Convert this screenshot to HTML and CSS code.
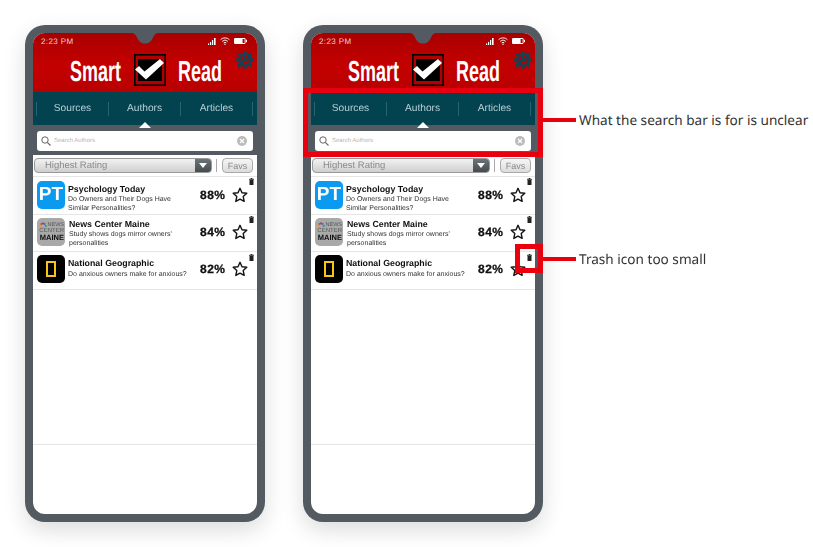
FILE: index.html
```html
<!DOCTYPE html>
<html lang="en">
<head>
    <meta charset="UTF-8">
    <meta name="viewport" content="width=device-width, initial-scale=1.0">
    <title>Smart Read</title>
    <link rel="stylesheet" href="styles.css">
</head>
<body>
    <svg class="defs" width="0" height="0">
        <symbol id="signal" viewBox="0 0 8 7"><path d="M0 7h1.200V5.500H0zM2 7h1.200V4H2zM4 7h1.200V2H4zM6 7h1.600V0H6z" fill="#fff"/></symbol>
        <symbol id="wifi" viewBox="0 0 10 8"><path d="M.6 2.600a6.400 6.400 0 0 1 8.800 0M2.200 4.300a4.100 4.100 0 0 1 5.600 0M3.700 5.900a1.900 1.900 0 0 1 2.600 0" fill="none" stroke="#fff" stroke-width=".9"/><circle cx="5" cy="7.200" r=".7" fill="#fff"/></symbol>
        <symbol id="battery" viewBox="0 0 13 6"><rect x="0" y="0" width="11.500" height="6" rx="1.200" fill="#fff"/><rect x="8.600" y="1" width="2" height="4" fill="#b00000"/><rect x="11.800" y="1.800" width="1.200" height="2.400" fill="#fff"/></symbol>
        <symbol id="gear" viewBox="0 0 18 18"><path d="M7.600 0h2.800l.4 2.200 1.600.7 1.900-1.300 2 2-1.300 1.900.7 1.600 2.200.4v2.800l-2.200.4-.7 1.600 1.300 1.900-2 2-1.900-1.300-1.600.7-.4 2.200H7.600l-.4-2.200-1.600-.7-1.900 1.300-2-2 1.300-1.900-.7-1.600L0 10.400V7.600l2.200-.4.700-1.600L1.600 3.700l2-2 1.900 1.300 1.600-.7z" fill="#1a3f50"/><circle cx="9" cy="9" r="4.400" fill="#b80000"/><path d="M2.600 16.800l6.900-7a3.400 3.400 0 0 0 4.400-4.300l-2 2-1.900-.5-.5-1.900 2-2a3.400 3.400 0 0 0-4.300 4.400L.8 14.900z" fill="#1a3f50"/></symbol>
        <symbol id="check" viewBox="0 0 32 32"><rect x=".8" y=".8" width="30.400" height="30.400" fill="#b00000" stroke="#000" stroke-width="1.600"/><rect x="4" y="5" width="24" height="22" fill="#000"/><path d="M1 15.500l4-3.500 5.500 5.500L26 5l4 4-18 16.500z" fill="#fff"/></symbol>
        <symbol id="star" viewBox="0 0 16 16"><path d="M8 1.300l2 4.500 4.800.5-3.600 3.300 1 4.800L8 12.100l-4.200 2.300 1-4.800L1.200 6.300 6 5.800z" fill="none" stroke="#111" stroke-width="1.400" stroke-linejoin="round"/></symbol>
        <symbol id="trash" viewBox="0 0 5 7"><path d="M1.700 0h1.600v.8h1.300q.4 0 .4.400v.6H0v-.6q0-.4.400-.4h1.300zM.5 2.100h4v4.300q0 .6-.6.6H1.100q-.6 0-.6-.6z" fill="#222"/></symbol>
        <symbol id="search" viewBox="0 0 10 10"><circle cx="4" cy="4" r="3.200" fill="none" stroke="#666" stroke-width="1"/><path d="M6.300 6.300L9.500 9.500" stroke="#666" stroke-width="1.100"/></symbol>
        <symbol id="clear" viewBox="0 0 10 10"><circle cx="5" cy="5" r="5" fill="#bbb"/><path d="M3 3l4 4M7 3L3 7" stroke="#fff" stroke-width="1.200"/></symbol>
        <symbol id="notch" viewBox="0 0 28 11"><path d="M0 0c3 0 4 1 6 4.500C8 8.500 10 10.500 14 10.500S20 8.500 22 4.500C24 1 25 0 28 0z" fill="#545a62"/></symbol>
        <symbol id="peacock" viewBox="0 0 8 6"><circle cx="1.200" cy="4" r="1.100" fill="#e8a020"/><circle cx="2.400" cy="2" r="1.100" fill="#d8452c"/><circle cx="4" cy="1.300" r="1.100" fill="#a0408c"/><circle cx="5.600" cy="2" r="1.100" fill="#3a6cc0"/><circle cx="6.800" cy="4" r="1.100" fill="#3aa050"/></symbol>
    </svg>

    <div class="page">
        <div class="phone">
            <div class="screen">
                <div class="header">
                    <svg class="notch"><use href="#notch"/></svg>
                    <div class="status">
                        <span>2:23 PM</span>
                        <span class="status-icons">
                            <svg class="ic-signal"><use href="#signal"/></svg>
                            <svg class="ic-wifi"><use href="#wifi"/></svg>
                            <svg class="ic-battery"><use href="#battery"/></svg>
                        </span>
                    </div>
                    <div class="brand">
                        <span class="brand-word word-smart">Smart</span>
                        <svg class="ic-check"><use href="#check"/></svg>
                        <span class="brand-word word-read">Read</span>
                    </div>
                    <svg class="ic-gear"><use href="#gear"/></svg>
                </div>
                <div class="tabs">
                    <div class="tab">Sources</div>
                    <div class="tab active">Authors</div>
                    <div class="tab">Articles</div>
                </div>
                <div class="searchbar">
                    <div class="searchbox">
                        <svg class="ic-search"><use href="#search"/></svg>
                        <span class="placeholder">Search Authors</span>
                        <svg class="ic-clear"><use href="#clear"/></svg>
                    </div>
                </div>
                <div class="filters">
                    <div class="select">
                        <span class="select-label">Highest Rating</span>
                        <span class="select-arrow"></span>
                    </div>
                    <span class="filter-sep"></span>
                    <div class="favs">Favs</div>
                </div>
                <ul class="list">
                    <li class="row">
                        <div class="logo logo-pt">PT</div>
                        <div class="info">
                            <div class="title">Psychology Today</div>
                            <div class="sub">Do Owners and Their Dogs Have Similar Personalities?</div>
                        </div>
                        <div class="pct">88%</div>
                        <svg class="ic-star"><use href="#star"/></svg>
                        <svg class="ic-trash"><use href="#trash"/></svg>
                    </li>
                    <li class="row">
                        <div class="logo logo-news">
                            <svg class="ic-peacock"><use href="#peacock"/></svg>
                            <span>NEWS</span><span>CENTER</span><b>MAINE</b>
                        </div>
                        <div class="info">
                            <div class="title">News Center Maine</div>
                            <div class="sub">Study shows dogs mirror owners' personalities</div>
                        </div>
                        <div class="pct">84%</div>
                        <svg class="ic-star"><use href="#star"/></svg>
                        <svg class="ic-trash"><use href="#trash"/></svg>
                    </li>
                    <li class="row">
                        <div class="logo logo-geo"><span></span></div>
                        <div class="info">
                            <div class="title">National Geographic</div>
                            <div class="sub">Do anxious owners make for anxious?</div>
                        </div>
                        <div class="pct">82%</div>
                        <svg class="ic-star"><use href="#star"/></svg>
                        <svg class="ic-trash"><use href="#trash"/></svg>
                    </li>
                </ul>
                <div class="list-end"></div>
            </div>
        </div>

        <div class="phone">
            <div class="screen">
                <div class="header">
                    <svg class="notch"><use href="#notch"/></svg>
                    <div class="status">
                        <span>2:23 PM</span>
                        <span class="status-icons">
                            <svg class="ic-signal"><use href="#signal"/></svg>
                            <svg class="ic-wifi"><use href="#wifi"/></svg>
                            <svg class="ic-battery"><use href="#battery"/></svg>
                        </span>
                    </div>
                    <div class="brand">
                        <span class="brand-word word-smart">Smart</span>
                        <svg class="ic-check"><use href="#check"/></svg>
                        <span class="brand-word word-read">Read</span>
                    </div>
                    <svg class="ic-gear"><use href="#gear"/></svg>
                </div>
                <div class="tabs">
                    <div class="tab">Sources</div>
                    <div class="tab active">Authors</div>
                    <div class="tab">Articles</div>
                </div>
                <div class="searchbar">
                    <div class="searchbox">
                        <svg class="ic-search"><use href="#search"/></svg>
                        <span class="placeholder">Search Authors</span>
                        <svg class="ic-clear"><use href="#clear"/></svg>
                    </div>
                </div>
                <div class="filters">
                    <div class="select">
                        <span class="select-label">Highest Rating</span>
                        <span class="select-arrow"></span>
                    </div>
                    <span class="filter-sep"></span>
                    <div class="favs">Favs</div>
                </div>
                <ul class="list">
                    <li class="row">
                        <div class="logo logo-pt">PT</div>
                        <div class="info">
                            <div class="title">Psychology Today</div>
                            <div class="sub">Do Owners and Their Dogs Have Similar Personalities?</div>
                        </div>
                        <div class="pct">88%</div>
                        <svg class="ic-star"><use href="#star"/></svg>
                        <svg class="ic-trash"><use href="#trash"/></svg>
                    </li>
                    <li class="row">
                        <div class="logo logo-news">
                            <svg class="ic-peacock"><use href="#peacock"/></svg>
                            <span>NEWS</span><span>CENTER</span><b>MAINE</b>
                        </div>
                        <div class="info">
                            <div class="title">News Center Maine</div>
                            <div class="sub">Study shows dogs mirror owners' personalities</div>
                        </div>
                        <div class="pct">84%</div>
                        <svg class="ic-star"><use href="#star"/></svg>
                        <svg class="ic-trash"><use href="#trash"/></svg>
                    </li>
                    <li class="row">
                        <div class="logo logo-geo"><span></span></div>
                        <div class="info">
                            <div class="title">National Geographic</div>
                            <div class="sub">Do anxious owners make for anxious?</div>
                        </div>
                        <div class="pct">82%</div>
                        <svg class="ic-star"><use href="#star"/></svg>
                        <svg class="ic-trash"><use href="#trash"/></svg>
                    </li>
                </ul>
                <div class="list-end"></div>
            </div>
        </div>
    </div>

    <!-- review notes drawn over the second phone -->
    <div class="mark mark-search"></div>
    <div class="note note-search"><span class="note-line"></span><span class="note-text">What the search bar is for is unclear</span></div>
    <div class="mark mark-trash"></div>
    <div class="note note-trash"><span class="note-line"></span><span class="note-text">Trash icon too small</span></div>
</body>
</html>
```
FILE: styles.css
```css
* {
    box-sizing: border-box;
}
html, body {
    margin: 0;
    padding: 0;
    background: #fff;
    overflow: hidden;
}
body {
    width: 813px;
    height: 547px;
    position: relative;
    font-family: "Liberation Sans", Arial, sans-serif;
    text-rendering: geometricPrecision;
}
.defs {
    position: absolute;
}
.page {
    display: flex;
    gap: 38px;
    padding: 25px 0 0 25px;
}

/* phone */
.phone {
    width: 240px;
    height: 497px;
    padding: 8px;
    background: #545a62;
    border-radius: 20px;
    box-shadow: 0 8px 22px rgba(0, 0, 0, 0.14);
}
.screen {
    height: 100%;
    background: #fff;
    border-radius: 12px;
    overflow: hidden;
    display: flex;
    flex-direction: column;
    filter: blur(0.3px);
}

/* header */
.header {
    height: 59px;
    flex: none;
    position: relative;
    padding: 4px 8px 0;
    color: #fff;
    background: linear-gradient(#a80000, #c40000 55%, #b80000);
}
.notch {
    position: absolute;
    left: 98px;
    top: 0;
    width: 28px;
    height: 11px;
}
.status {
    display: flex;
    justify-content: space-between;
    align-items: center;
    height: 8px;
    font-size: 8px;
    letter-spacing: 0.4px;
    color: #e9d0d0;
}
.status-icons {
    display: flex;
    align-items: center;
    gap: 4px;
    margin-right: 2px;
}
.ic-signal {
    width: 8px;
    height: 7px;
}
.ic-wifi {
    width: 10px;
    height: 8px;
}
.ic-battery {
    width: 13px;
    height: 6px;
}
.brand {
    display: flex;
    justify-content: center;
    align-items: center;
    gap: 13px;
    margin-top: 9px;
    height: 32px;
}
.brand-word {
    padding-top: 3px;
    font-weight: 700;
    font-size: 29px;
    line-height: 32px;
    white-space: nowrap;
    transform: scaleX(0.62);
}
.word-smart {
    width: 51px;
    display: flex;
    justify-content: center;
}
.word-read {
    width: 42px;
    display: flex;
    justify-content: center;
}
.ic-check {
    width: 32px;
    height: 32px;
}
.ic-gear {
    position: absolute;
    right: 3px;
    top: 18px;
    width: 18px;
    height: 18px;
}

/* tabs */
.tabs {
    height: 33px;
    flex: none;
    display: flex;
    align-items: center;
    padding: 0 4px 0 3px;
    background: #03424f;
}
.tab {
    flex: 1;
    height: 14px;
    line-height: 13px;
    text-align: center;
    font-size: 10.200px;
    color: #b7d0d5;
    border-left: 1px solid #2a6270;
    position: relative;
}
.tab:last-child {
    border-right: 1px solid #2a6270;
}
.tab.active::after {
    content: "";
    position: absolute;
    left: 50%;
    top: 20px;
    margin-left: -6px;
    border-left: 6px solid transparent;
    border-right: 6px solid transparent;
    border-bottom: 6px solid #fff;
}

/* search */
.searchbar {
    height: 30px;
    flex: none;
    padding: 6px 4px 0;
    background: #545a62;
}
.searchbox {
    height: 20px;
    display: flex;
    align-items: center;
    padding: 0 6px 0 4px;
    background: #fff;
    border-radius: 3px;
}
.ic-search {
    width: 10px;
    height: 10px;
}
.placeholder {
    flex: 1;
    margin-left: 3px;
    font-size: 6px;
    color: #b4b4b4;
}
.ic-clear {
    width: 10px;
    height: 10px;
}

/* filter row */
.filters {
    height: 21px;
    flex: none;
    display: flex;
    align-items: center;
    padding: 0 4px 0 1px;
}
.select {
    width: 178px;
    height: 15px;
    display: flex;
    border: 1px solid #9a9a9a;
    border-radius: 4px;
    overflow: hidden;
    background: linear-gradient(#f2f2f2, #cfcfcf);
}
.select-label {
    flex: 1;
    padding-left: 10px;
    font-size: 9.500px;
    line-height: 14px;
    color: #8b8b8b;
}
.select-arrow {
    width: 16px;
    position: relative;
    background: linear-gradient(#6c7478, #454c50);
}
.select-arrow::after {
    content: "";
    position: absolute;
    left: 4px;
    top: 4px;
    border-left: 4px solid transparent;
    border-right: 4px solid transparent;
    border-top: 5px solid #fff;
}
.filter-sep {
    width: 1px;
    height: 13px;
    margin: 0 5px 0 4px;
    background: #aaa;
}
.favs {
    width: 31px;
    height: 15px;
    text-align: center;
    font-size: 9px;
    line-height: 14px;
    color: #8b8b8b;
    border: 1px solid #aaa;
    border-radius: 4px;
    background: linear-gradient(#f6f6f6, #dcdcdc);
}

/* list */
.list {
    list-style: none;
    margin: 0;
    padding: 0;
    border-top: 1px solid #e6e6e6;
}
.row {
    height: 37.500px;
    position: relative;
    display: flex;
    align-items: center;
    padding: 0 9px 0 4px;
    border-bottom: 1px solid #e6e6e6;
}
.row:nth-child(n+2) {
    padding-bottom: 2px;
}
.logo {
    width: 28px;
    height: 28px;
    flex: none;
    border-radius: 5px;
}
.logo-pt {
    background: #0a9bf0;
    color: #fff;
    font-weight: 700;
    font-size: 19px;
    line-height: 28px;
    text-align: center;
}
.logo-news {
    position: relative;
    background: #a9a9a9;
    color: #555;
    font-size: 6px;
    line-height: 6px;
    text-align: right;
    padding: 4px 1px 0 0;
    display: flex;
    flex-direction: column;
}
.logo-news span:first-of-type {
    font-size: 5.500px;
}
.logo-news b {
    color: #111;
    font-size: 7.500px;
    line-height: 8px;
}
.ic-peacock {
    position: absolute;
    left: 2px;
    top: 4px;
    width: 8px;
    height: 6px;
}
.logo-geo {
    background: #000;
    padding: 6px 9px;
}
.logo-geo span {
    display: block;
    height: 16px;
    border: 2px solid #f5c518;
}
.info {
    flex: 1;
    min-width: 0;
    align-self: flex-start;
    padding: 5.500px 6px 0 3px;
}
.row:first-child .info {
    padding-top: 6.500px;
}
.row:nth-child(2) .info {
    padding-top: 4.500px;
    padding-left: 4px;
}
.title {
    font-size: 8.800px;
    font-weight: 700;
    line-height: 11px;
    color: #111;
}
.sub {
    font-size: 7px;
    line-height: 9px;
    color: #333;
}
.row:last-child .sub {
    margin-top: 1px;
}
.pct {
    width: 33px;
    flex: none;
    padding-left: 1px;
    font-size: 12px;
    letter-spacing: 0.5px;
    font-weight: 700;
    color: #111;
    -webkit-text-stroke: 0.3px #111;
}
.ic-star {
    width: 16px;
    height: 16px;
    flex: none;
}
.ic-trash {
    position: absolute;
    right: 3px;
    top: 1px;
    width: 5px;
    height: 7px;
}
.row:nth-child(3) .ic-trash {
    top: 2px;
}
.list-end {
    margin-top: 154px;
    border-top: 1px solid #e6e6e6;
}

/* review notes */
.mark {
    position: absolute;
    border: 5px solid #e8000f;
}
.mark-search {
    left: 303px;
    top: 88px;
    width: 240px;
    height: 69px;
}
.mark-trash {
    left: 515px;
    top: 244px;
    width: 28px;
    height: 29px;
}
.note {
    position: absolute;
    left: 543px;
    display: flex;
    align-items: center;
    height: 20px;
    font-family: "Noto Sans", sans-serif;
    font-size: 13.600px;
    color: #333;
    white-space: nowrap;
}
.note-search {
    top: 110px;
}
.note-trash {
    top: 249px;
}
.note-line {
    width: 33px;
    height: 4px;
    margin-right: 3px;
    background: #e8000f;
}
.note-text {
    margin-top: -2px;
}
```
